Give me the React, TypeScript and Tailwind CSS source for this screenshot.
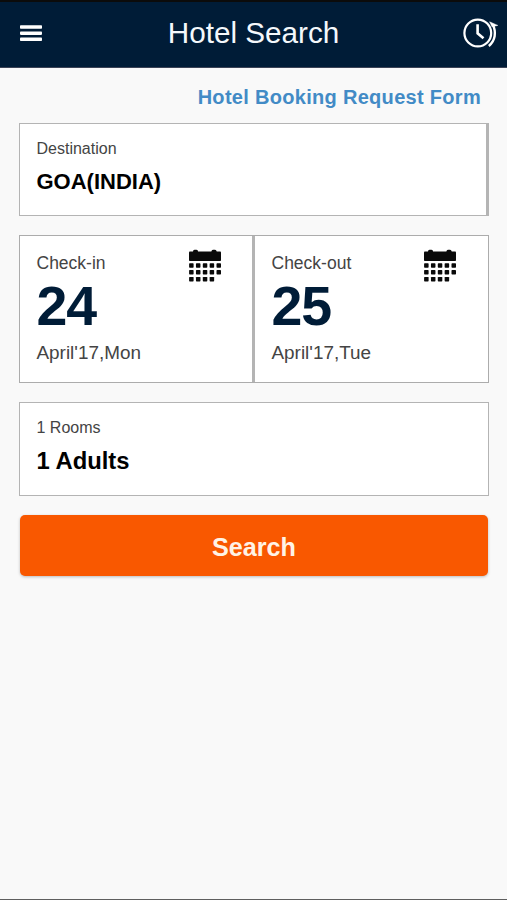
import React from 'react';

type Stay = {
  label: string;
  day: string;
  date: string;
};

const STAYS: Stay[] = [
  { label: 'Check-in', day: '24', date: "April'17,Mon" },
  { label: 'Check-out', day: '25', date: "April'17,Tue" },
];

const DOT_ROWS = [5, 5, 4];

const MenuIcon: React.FC = () => (
  <svg width="24" height="18" viewBox="0 0 24 18" fill="#fff">
    <rect x="0" y="1.2" width="22" height="3.5" rx="0.8" />
    <rect x="0" y="7.4" width="22" height="3.5" rx="0.8" />
    <rect x="0" y="13.6" width="22" height="3.5" rx="0.8" />
  </svg>
);

const CalendarIcon: React.FC = () => (
  <svg width="34" height="34" viewBox="0 0 34 34" fill="#0a0a0a">
    <rect x="5" y="0.8" width="5" height="4" rx="1.5" />
    <rect x="23.5" y="0.8" width="5" height="4" rx="1.5" />
    <rect x="1" y="2.5" width="32" height="9.5" rx="0.8" />
    {DOT_ROWS.map((count, row) =>
      Array.from({ length: count }, (_, col) => (
        <rect
          key={`${row}-${col}`}
          x={1.1 + col * 6.85}
          y={14.2 + row * 6.85}
          width="4.5"
          height="4.5"
          rx="0.7"
        />
      ))
    )}
  </svg>
);

const HistoryIcon: React.FC = () => (
  <svg width="38" height="32" viewBox="0 0 38 32" fill="none" stroke="#fff">
    <circle cx="15.8" cy="16" r="13.4" strokeWidth="2.2" />
    <path d="M15.6 7.2V16.3L21.5 21.3" strokeWidth="2.6" />
    <path d="M30.8 7.5C34.6 15.5 33.2 23.8 26.8 29" strokeWidth="2.4" />
    <path d="M27.6 4.8L35.8 8.4L30 9.8Z" fill="#fff" strokeWidth="0.5" />
  </svg>
);

const App: React.FC = () => {
  return (
    <div className="flex flex-col w-full h-[900px] overflow-hidden bg-[#f9f9f9] border-b border-[#5e5e5e] font-['Liberation_Sans',Arial,sans-serif] text-[#444]">
      <header className="flex items-center justify-between h-[68px] shrink-0 pl-5 pr-[7px] pb-[3px] bg-[#001c37] border-t-2 border-t-[#0b0b0b] border-b border-b-[#3c4356]">
        <button className="flex w-[141px]" aria-label="Menu">
          <MenuIcon />
        </button>
        <h1 className="pb-px text-[29.7px] leading-8 text-[#f4f8fc] whitespace-nowrap">
          Hotel Search
        </h1>
        <button className="flex justify-end w-[154px]" aria-label="History">
          <HistoryIcon />
        </button>
      </header>

      <main className="flex flex-col pl-[19px] pr-[18px]">
        <a className="self-end h-[55px] pt-[17px] pr-[8px] text-[20px] leading-6 tracking-[0.3px] font-bold text-[#428bc6]">
          Hotel Booking Request Form
        </a>

        <section className="h-[93px] pl-[16.5px] pt-[15px] bg-white border border-r-[3px] border-[#b4b4b4]">
          <p className="text-[16px] leading-5">Destination</p>
          <p className="mt-[9px] text-[22px] leading-7 font-bold text-black">
            GOA(INDIA)
          </p>
        </section>

        <section className="flex h-[148px] mt-[19px] bg-white border border-[#acacac]">
          {STAYS.map((stay) => (
            <div
              key={stay.day}
              className="flex justify-between w-[233px] pl-[16.5px] pr-[31px] pt-[13px] first:w-[235px] first:border-r-[3px] first:border-[#b4b4b4] first:pr-[30px]"
            >
              <div>
                <p className="mt-[2px] text-[17.5px] leading-6">{stay.label}</p>
                <p className="mt-px text-[55.5px] leading-[60px] tracking-[-1.2px] font-bold text-[#001c37]">
                  {stay.day}
                </p>
                <p className="mt-[5px] text-[18.9px] leading-6">{stay.date}</p>
              </div>
              <CalendarIcon />
            </div>
          ))}
        </section>

        <section className="h-[94px] mt-[19px] pl-[16.5px] pt-[15px] bg-white border border-[#b4b4b4]">
          <p className="text-[16px] leading-5">1 Rooms</p>
          <p className="mt-[9px] text-[23.8px] leading-7 font-bold text-black">
            1 Adults
          </p>
        </section>

        <button className="h-[61px] mt-[19px] mx-px pt-[2px] rounded-[5px] bg-[#f95800] text-[25.2px] leading-8 font-bold text-[#fff3e6] shadow-[0_1px_3px_rgba(0,0,0,0.25)]">
          Search
        </button>
      </main>
    </div>
  );
};

export default App;
